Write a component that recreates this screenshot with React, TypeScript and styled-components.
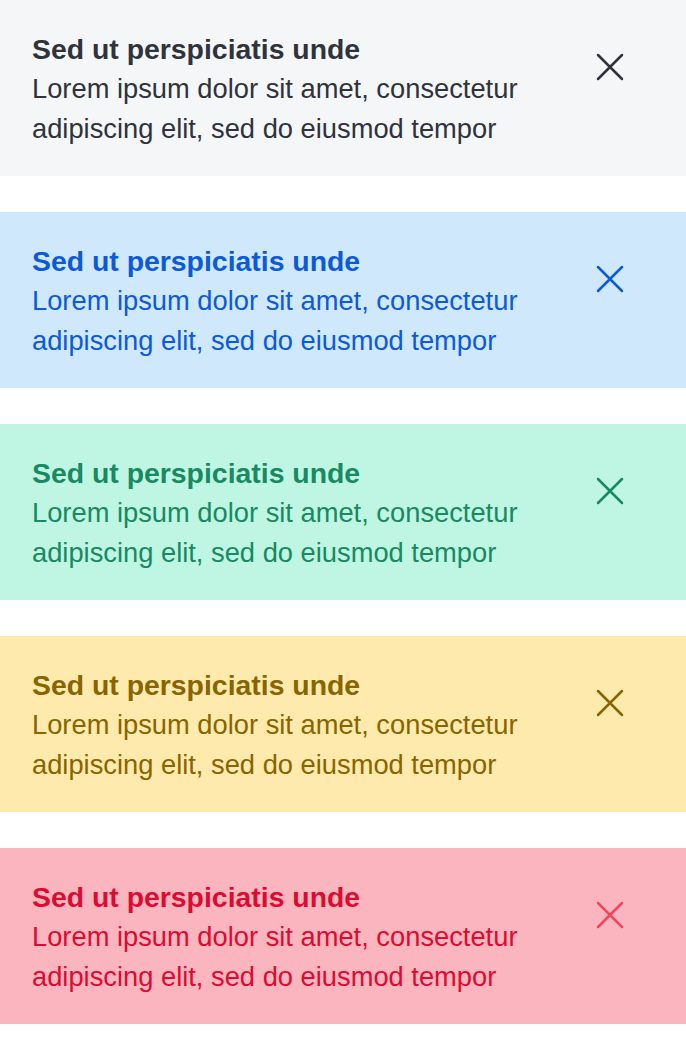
import React from "react";
import styled, { createGlobalStyle } from "styled-components";

const Global = createGlobalStyle`
  html, body { margin: 0; padding: 0; background: #ffffff; }
  body { font-family: "Liberation Sans", Arial, sans-serif; }
`;

type Tone = { bg: string; fg: string; icon: string };

const tones: Record<string, Tone> = {
  neutral: { bg: "#f5f6f8", fg: "#2f333c", icon: "#2f333c" },
  info: { bg: "#cfe8fc", fg: "#0d5ad8", icon: "#0d5ad8" },
  success: { bg: "#bff5e3", fg: "#178a62", icon: "#178a62" },
  warning: { bg: "#feeaad", fg: "#886500", icon: "#886500" },
  danger: { bg: "#fbb5be", fg: "#dc0b32", icon: "#f0465e" },
};

const Stack = styled.div`
  display: flex;
  flex-direction: column;
  gap: 36px;
`;

const Alert = styled.div<{ $tone: Tone }>`
  display: flex;
  align-items: flex-start;
  background: ${(p) => p.$tone.bg};
  color: ${(p) => p.$tone.fg};
  padding: 29px 54px 27px 32px;
  height: 176px;
  box-sizing: border-box;
`;

const Body = styled.div`
  flex: 1;
  font-size: 27.3px;
  line-height: 40px;
  white-space: nowrap;
`;

const Title = styled.div`
  font-weight: 700;
  font-size: 28.4px;
`;

const Text = styled.div`
  font-weight: 400;
`;

const Close = styled.button<{ $color: string }>`
  width: 44px;
  height: 44px;
  margin-top: 16px;
  padding: 0;
  border: none;
  background: transparent;
  display: flex;
  align-items: center;
  justify-content: center;
  color: ${(p) => p.$color};
  cursor: pointer;
  flex-shrink: 0;
`;

const XIcon = () => (
  <svg width="28" height="28" viewBox="0 0 28 28" fill="none">
    <path d="M2 2 L26 26 M26 2 L2 26" stroke="currentColor" strokeWidth="2.5" strokeLinecap="round" />
  </svg>
);

export default function App() {
  const order = ["neutral", "info", "success", "warning", "danger"];
  return (
    <>
      <Global />
      <Stack>
        {order.map((k) => (
          <Alert key={k} $tone={tones[k]}>
            <Body>
              <Title>Sed ut perspiciatis unde</Title>
              <Text>
                Lorem ipsum dolor sit amet, consectetur
                <br />
                adipiscing elit, sed do eiusmod tempor
              </Text>
            </Body>
            <Close $color={tones[k].icon} aria-label="Close">
              <XIcon />
            </Close>
          </Alert>
        ))}
      </Stack>
    </>
  );
}
